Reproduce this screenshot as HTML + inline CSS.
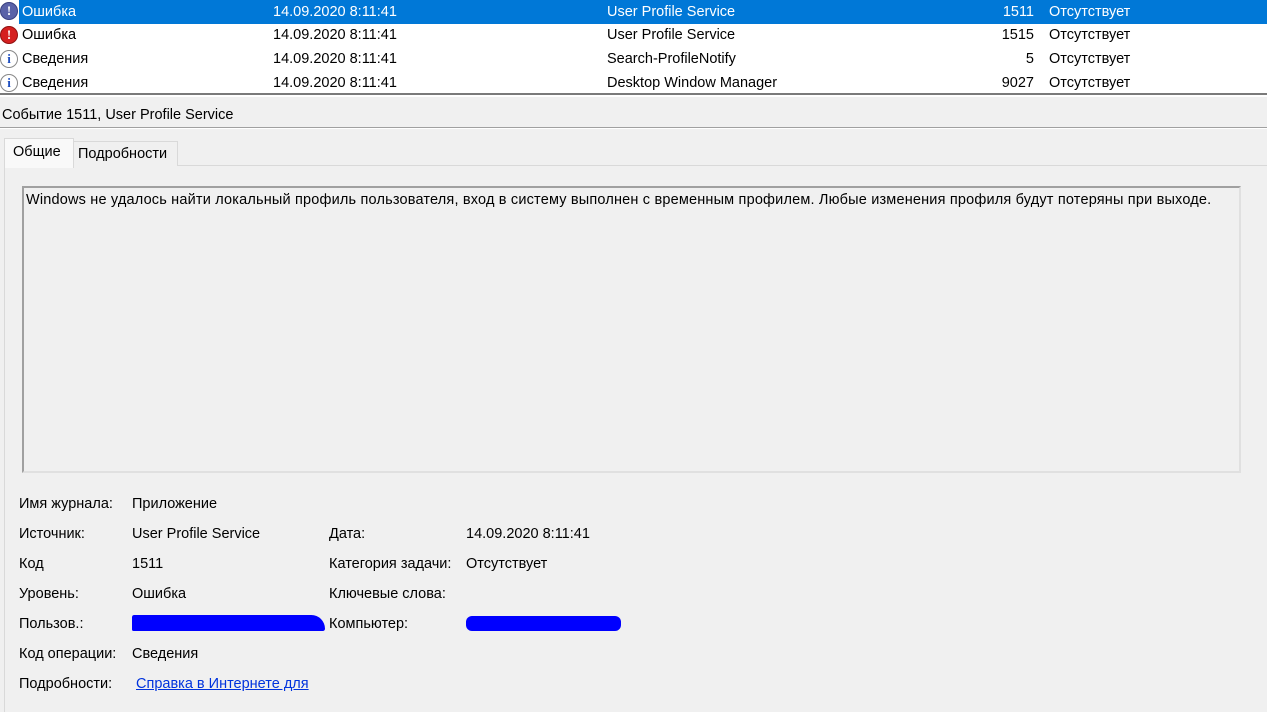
<!DOCTYPE html>
<html><head><meta charset="utf-8"><style>
body{margin:0;width:1267px;height:711px;overflow:hidden;background:#f0f0f0;font-family:"Liberation Sans",sans-serif;font-size:14.5px;color:#000;position:relative}
.a{position:absolute;white-space:nowrap}
.n{position:absolute;right:233px;white-space:nowrap}
.ic{position:absolute;left:0px;top:2px;width:18px;height:18px;border-radius:50%;box-sizing:border-box;border:1px solid #888;text-align:center;font:bold 13px/16px "Liberation Serif",serif}
</style></head><body>
<div class="a" style="left:0;top:0;width:1267px;height:94px;background:#fff"></div>
<div class="a" style="left:19px;top:0;width:1248px;height:24px;background:#0078d7"></div>
<div class="ic" style="background:#5a62a8;color:#fff;border-color:#3a4080">!</div>
<div class="ic" style="top:26px;background:#d52020;color:#fff;border-color:#901010">!</div>
<div class="ic" style="top:50px;background:#fff;color:#2050c0">i</div>
<div class="ic" style="top:74px;background:#fff;color:#2050c0">i</div>
<div class="a" style="left:22px;top:4px;color:#fff">Ошибка</div>
<div class="a" style="left:273px;top:4px;color:#fff">14.09.2020 8:11:41</div>
<div class="a" style="left:607px;top:4px;color:#fff">User Profile Service</div>
<div class="n" style="top:4px;color:#fff">1511</div>
<div class="a" style="left:1049px;top:4px;color:#fff">Отсутствует</div>
<div class="a" style="left:22px;top:27px">Ошибка</div>
<div class="a" style="left:273px;top:27px">14.09.2020 8:11:41</div>
<div class="a" style="left:607px;top:27px">User Profile Service</div>
<div class="n" style="top:27px">1515</div>
<div class="a" style="left:1049px;top:27px">Отсутствует</div>
<div class="a" style="left:22px;top:51px">Сведения</div>
<div class="a" style="left:273px;top:51px">14.09.2020 8:11:41</div>
<div class="a" style="left:607px;top:51px">Search-ProfileNotify</div>
<div class="n" style="top:51px">5</div>
<div class="a" style="left:1049px;top:51px">Отсутствует</div>
<div class="a" style="left:22px;top:75px">Сведения</div>
<div class="a" style="left:273px;top:75px">14.09.2020 8:11:41</div>
<div class="a" style="left:607px;top:75px">Desktop Window Manager</div>
<div class="n" style="top:75px">9027</div>
<div class="a" style="left:1049px;top:75px">Отсутствует</div>
<div class="a" style="left:0;top:93px;width:1267px;height:2px;background:#7a7a7a"></div>
<div class="a" style="left:0;top:95px;width:1267px;height:2px;background:#fff"></div>
<div class="a" style="left:2px;top:107px">Событие 1511, User Profile Service</div>
<div class="a" style="left:0;top:127px;width:1267px;height:1px;background:#a0a0a0"></div>
<div class="a" style="left:0;top:128px;width:1267px;height:1px;background:#fff"></div>
<div class="a" style="left:4px;top:165px;width:1263px;height:546px;background:#f0f0f0;border-top:1px solid #d9d9d9;border-left:1px solid #d9d9d9"></div>
<div class="a" style="left:72px;top:141px;width:104px;height:24px;background:#f0f0f0;border:1px solid #d9d9d9;border-bottom:none"></div>
<div class="a" style="left:4px;top:138px;width:68px;height:29px;background:#f9f9f9;border:1px solid #d9d9d9;border-bottom:none"></div>
<div class="a" style="left:13px;top:144px">Общие</div>
<div class="a" style="left:78px;top:146px">Подробности</div>
<div class="a" style="left:22px;top:186px;width:1215px;height:283px;background:#f0f0f0;border:2px solid #a0a0a0;border-right-color:#e0e0e0;border-bottom-color:#e0e0e0"></div>
<div class="a" style="left:26px;top:192px;letter-spacing:0.18px">Windows не удалось найти локальный профиль пользователя, вход в систему выполнен с временным профилем. Любые изменения профиля будут потеряны при выходе.</div>
<div class="a" style="left:19px;top:496px">Имя журнала:</div>
<div class="a" style="left:132px;top:496px">Приложение</div>
<div class="a" style="left:19px;top:526px">Источник:</div>
<div class="a" style="left:132px;top:526px">User Profile Service</div>
<div class="a" style="left:329px;top:526px">Дата:</div>
<div class="a" style="left:466px;top:526px">14.09.2020 8:11:41</div>
<div class="a" style="left:19px;top:556px">Код</div>
<div class="a" style="left:132px;top:556px">1511</div>
<div class="a" style="left:329px;top:556px">Категория задачи:</div>
<div class="a" style="left:466px;top:556px">Отсутствует</div>
<div class="a" style="left:19px;top:586px">Уровень:</div>
<div class="a" style="left:132px;top:586px">Ошибка</div>
<div class="a" style="left:329px;top:586px">Ключевые слова:</div>
<div class="a" style="left:19px;top:616px">Пользов.:</div>
<div class="a" style="left:132px;top:615px;width:193px;height:16px;background:#0000ff;border-radius:8px 50px 8px 6px"></div>
<div class="a" style="left:329px;top:616px">Компьютер:</div>
<div class="a" style="left:466px;top:616px;width:155px;height:15px;background:#0000ff;border-radius:6px"></div>
<div class="a" style="left:19px;top:646px">Код операции:</div>
<div class="a" style="left:132px;top:646px">Сведения</div>
<div class="a" style="left:19px;top:676px">Подробности:</div>
<div class="a" style="left:136px;top:676px;color:#0033dd;text-decoration:underline">Справка в Интернете для </div>
</body></html>
